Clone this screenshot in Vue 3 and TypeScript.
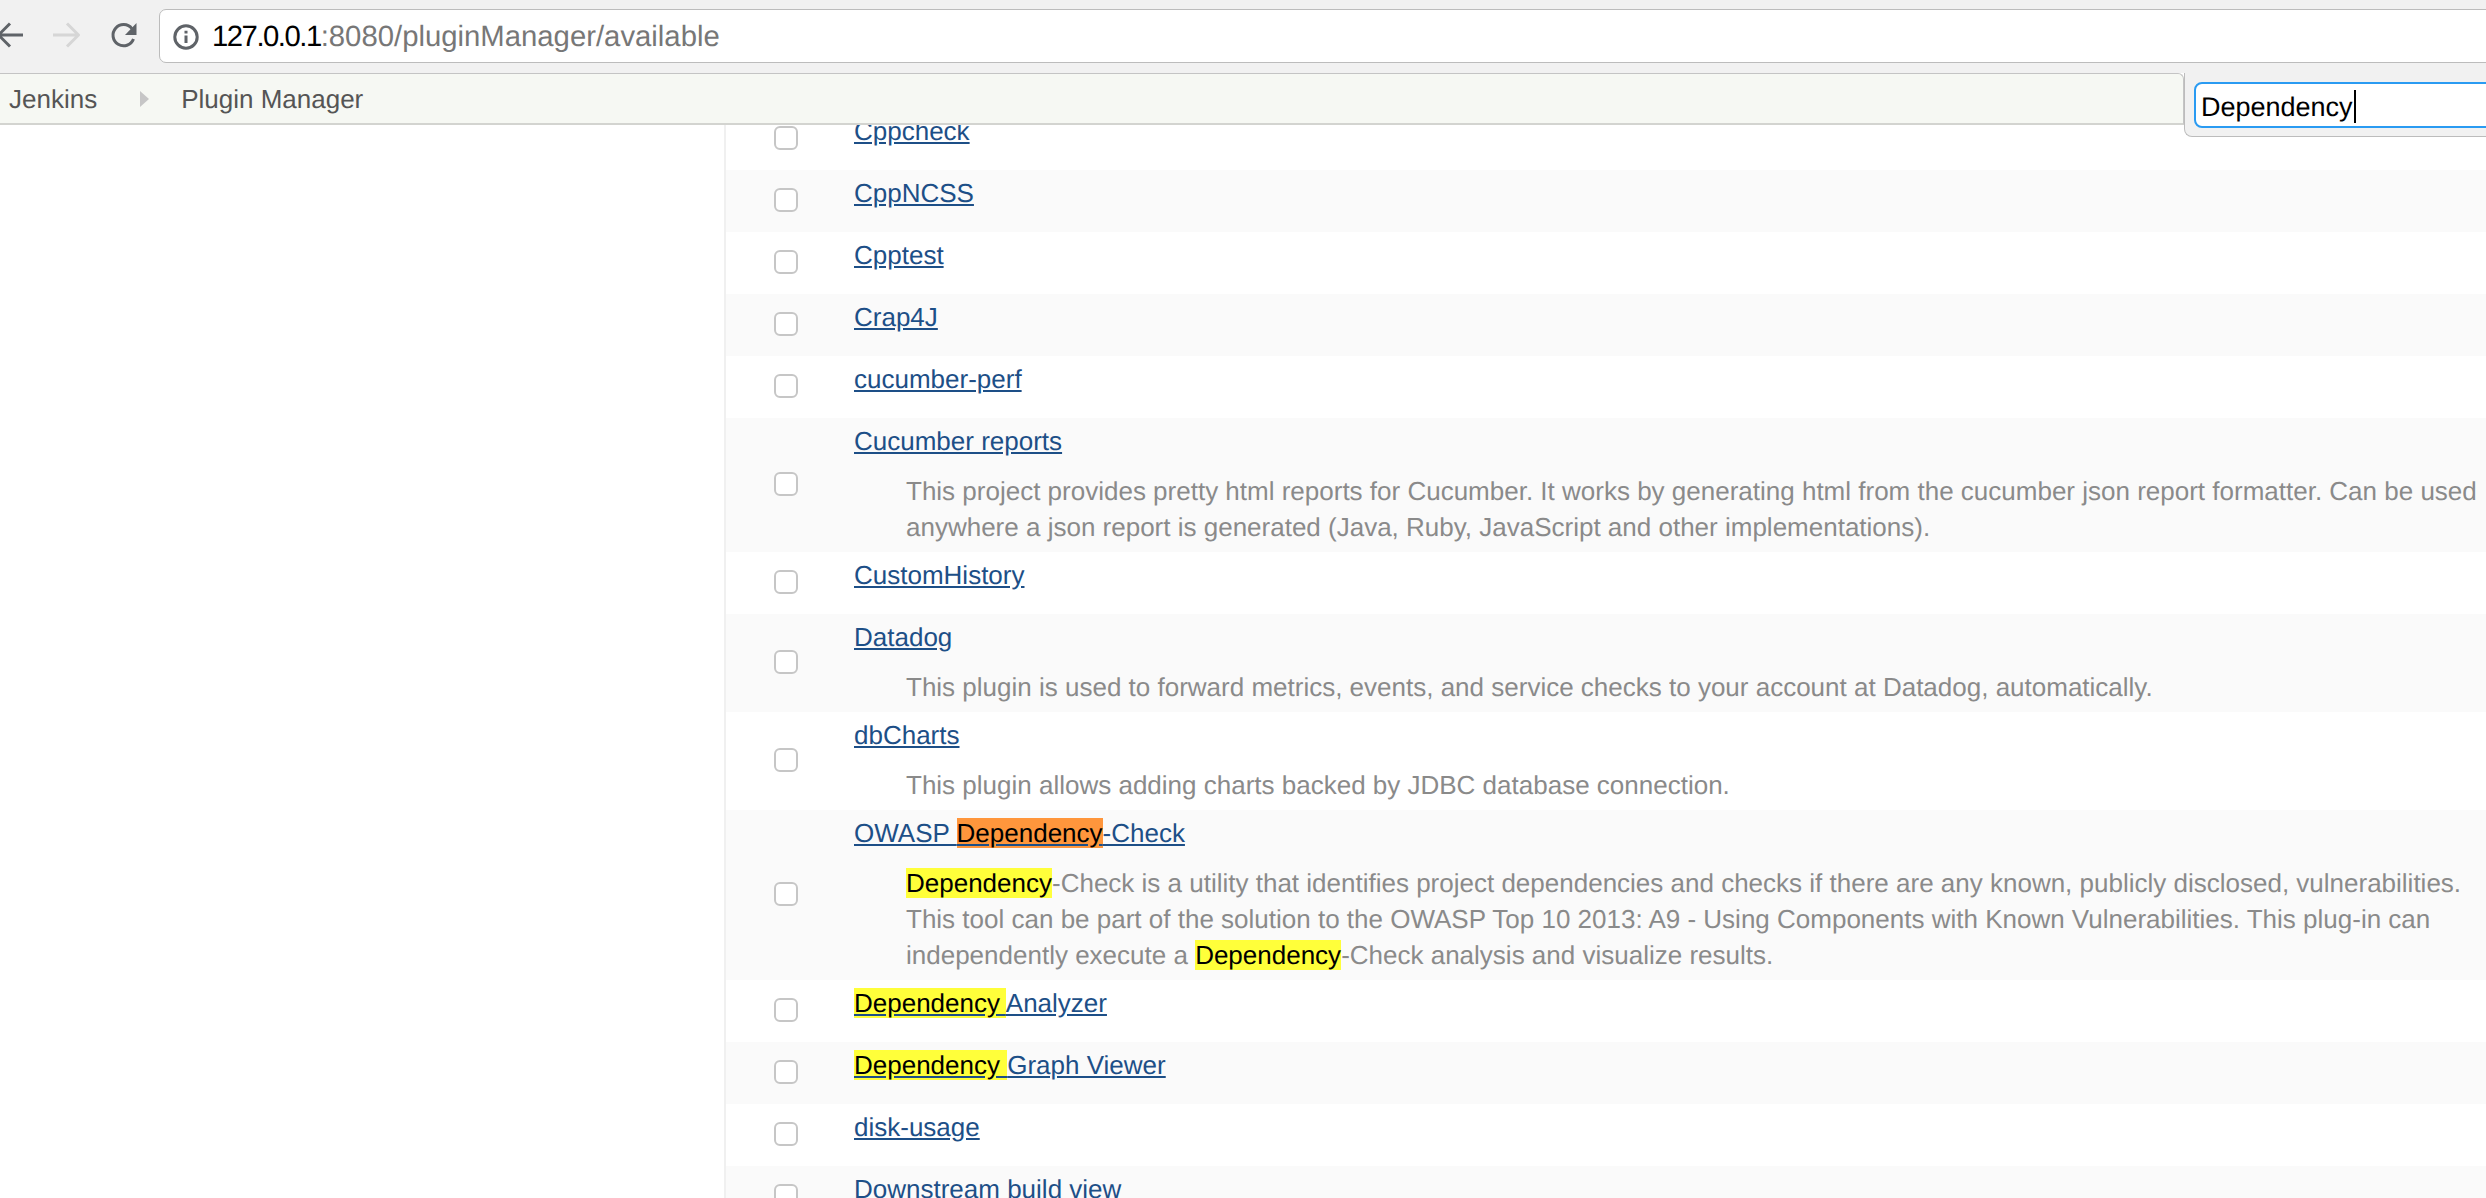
<script setup lang="ts">
interface Segment {
  text: string;
  mark?: "yellow" | "orange";
}

interface Plugin {
  title: Segment[];
  desc?: Segment[];
}

const plain = (text: string): Segment[] => [{ text }];

const plugins: Plugin[] = [
  { title: plain("Cppcheck") },
  { title: plain("CppNCSS") },
  { title: plain("Cpptest") },
  { title: plain("Crap4J") },
  { title: plain("cucumber-perf") },
  {
    title: plain("Cucumber reports"),
    desc: plain(
      "This project provides pretty html reports for Cucumber. It works by generating html from the cucumber json report formatter. Can be used anywhere a json report is generated (Java, Ruby, JavaScript and other implementations).",
    ),
  },
  { title: plain("CustomHistory") },
  {
    title: plain("Datadog"),
    desc: plain(
      "This plugin is used to forward metrics, events, and service checks to your account at Datadog, automatically.",
    ),
  },
  {
    title: plain("dbCharts"),
    desc: plain("This plugin allows adding charts backed by JDBC database connection."),
  },
  {
    title: [
      { text: "OWASP " },
      { text: "Dependency", mark: "orange" },
      { text: "-Check" },
    ],
    desc: [
      { text: "Dependency", mark: "yellow" },
      {
        text: "-Check is a utility that identifies project dependencies and checks if there are any known, publicly disclosed, vulnerabilities. This tool can be part of the solution to the OWASP Top 10 2013: A9 - Using Components with Known Vulnerabilities. This plug-in can independently execute a ",
      },
      { text: "Dependency", mark: "yellow" },
      { text: "-Check analysis and visualize results." },
    ],
  },
  { title: [{ text: "Dependency ", mark: "yellow" }, { text: "Analyzer" }] },
  { title: [{ text: "Dependency ", mark: "yellow" }, { text: "Graph Viewer" }] },
  { title: plain("disk-usage") },
  { title: plain("Downstream build view") },
];
</script>

<template>
  <div class="page">
    <header class="header">
      <div class="toolbar">
        <svg class="nav back" width="28" height="28" viewBox="0 0 28 28">
          <path d="M28 14H4M15 2.5 3.5 14 15 25.5" />
        </svg>
        <svg class="nav forward" width="28" height="28" viewBox="0 0 28 28">
          <path d="M1 14h25M15 2.5 26.5 14 15 25.5" />
        </svg>
        <svg class="nav reload" width="28" height="28" viewBox="0 0 28 28">
          <path d="M23.5 18a10.6 10.6 0 1 1-1.6-10.4" />
          <path class="reload-head" d="M26.5 2v12H15z" />
        </svg>
        <div class="url-bar">
          <svg class="info" width="26" height="26" viewBox="0 0 26 26">
            <circle cx="13" cy="13" r="11.2" />
            <path d="M13 11.5V19M13 6.8v2.8" />
          </svg>
          <span class="url-host">127.0.0.1</span><span class="url-rest">:8080/pluginManager/available</span>
        </div>
      </div>
      <div class="subbar">
        <nav class="breadcrumb">
          <span class="crumb">Jenkins</span>
          <span class="crumb-arrow"></span>
          <span class="crumb">Plugin Manager</span>
        </nav>
        <div class="filter-panel">
          <div class="filter-input">Dependency<span class="caret"></span></div>
        </div>
      </div>
    </header>

    <main class="content">
      <aside class="side"></aside>
      <div class="plugin-list">
        <div v-for="plugin in plugins" :key="plugin.title.map((s) => s.text).join('')" class="plugin-row">
          <div class="check-cell"><span class="checkbox"></span></div>
          <div class="info-cell">
            <div class="title">
              <a class="title-link" href="#">
                <span v-for="(seg, i) in plugin.title" :key="i" :class="seg.mark">{{ seg.text }}</span>
              </a>
            </div>
            <div v-if="plugin.desc" class="desc">
              <span v-for="(seg, i) in plugin.desc" :key="i" :class="seg.mark">{{ seg.text }}</span>
            </div>
          </div>
        </div>
      </div>
    </main>
  </div>
</template>

<style scoped>
.page {
  width: 2486px;
  height: 1198px;
  overflow: hidden;
  background: #fff;
  font-family: "Liberation Sans", Arial, sans-serif;
  font-size: 26px;
  line-height: 36px;
  text-rendering: geometricPrecision;
}

.header {
  position: relative;
  z-index: 2;
  height: 125px;
}

.toolbar {
  display: flex;
  align-items: flex-start;
  height: 73px;
  padding-top: 9px;
  box-sizing: border-box;
  background: #f1f1f1;
}

.nav {
  flex: none;
  margin-top: 12px;
  fill: none;
  stroke-width: 3px;
}

.back {
  margin-left: -5px;
  stroke: #5f6368;
}

.forward {
  margin-left: 29px;
  stroke: #d6d6d6;
}

.reload {
  margin-left: 30px;
  stroke: #5f6368;
}

.reload-head {
  fill: #5f6368;
  stroke: none;
}

.url-bar {
  display: flex;
  align-items: center;
  flex: 1;
  height: 54px;
  margin-left: 21px;
  margin-right: -20px;
  padding-top: 2px;
  padding-left: 13px;
  box-sizing: border-box;
  background: #fff;
  border: 1px solid #bcbcbc;
  border-radius: 7px;
  font-size: 29.3px;
  white-space: nowrap;
}

.info {
  flex: none;
  margin-right: 13px;
  fill: none;
  stroke: #5f6368;
  stroke-width: 3px;
}

.url-host {
  color: #000;
  letter-spacing: -1.5px;
}

.url-rest {
  color: #777;
}

.subbar {
  display: flex;
  align-items: flex-start;
  height: 52px;
}

.breadcrumb {
  display: flex;
  align-items: center;
  flex: 1;
  height: 52px;
  padding-left: 9px;
  box-sizing: border-box;
  background: #f6f8f3;
  border-top: 1px solid #c4c4c4;
  border-right: 1px solid #c4c4c4;
  border-bottom: 2px solid #d3d4d0;
  border-top-right-radius: 6px;
  color: #555;
}

.crumb-arrow {
  width: 0;
  height: 0;
  margin: 0 32px 0 43px;
  border-top: 8px solid transparent;
  border-bottom: 8px solid transparent;
  border-left: 9px solid #c6c6c6;
}

.filter-panel {
  flex: none;
  width: 302px;
  height: 64px;
  padding: 9px 0 0 9px;
  box-sizing: border-box;
  background: #f1f1f1;
  border-bottom: 1px solid #bcbcbc;
  border-left: 1px solid #bcbcbc;
  border-bottom-left-radius: 8px;
}

.filter-input {
  display: flex;
  align-items: center;
  height: 46px;
  margin-right: -20px;
  padding-top: 3px;
  padding-left: 5px;
  box-sizing: border-box;
  background: #fff;
  border: 2px solid #2a9bf2;
  border-radius: 8px;
  color: #000;
  font-size: 27px;
}

.caret {
  width: 2px;
  height: 33px;
  margin-left: 1px;
  background: #000;
}

.content {
  display: flex;
  margin-top: -17px;
}

.side {
  flex: none;
  width: 724px;
  border-right: 2px solid #f0f0f0;
}

.plugin-list {
  flex: 1;
  min-width: 0;
}

.plugin-row {
  display: flex;
  align-items: center;
}

.plugin-row:nth-child(even) {
  background: #fafafa;
}

.check-cell {
  display: flex;
  justify-content: flex-start;
  flex: none;
  width: 128px;
  padding-left: 48px;
  box-sizing: border-box;
}

.checkbox {
  width: 24px;
  height: 24px;
  margin-bottom: 2px;
  box-sizing: border-box;
  background: #fff;
  border: 2px solid #c6c6c6;
  border-radius: 6px;
}

.info-cell {
  flex: 1;
  min-width: 0;
  padding: 5px 0 7px;
}

.title {
  margin-bottom: 14px;
}

.title-link {
  color: #1d4f87;
  text-decoration: underline;
}

.desc {
  padding-left: 52px;
  color: #8a8a8a;
}

.yellow {
  background: #ffff3a;
  color: #000;
}

.orange {
  background: #ff963c;
  color: #000;
}
</style>

<style>
html,
body {
  margin: 0;
  overflow: hidden;
}
</style>
